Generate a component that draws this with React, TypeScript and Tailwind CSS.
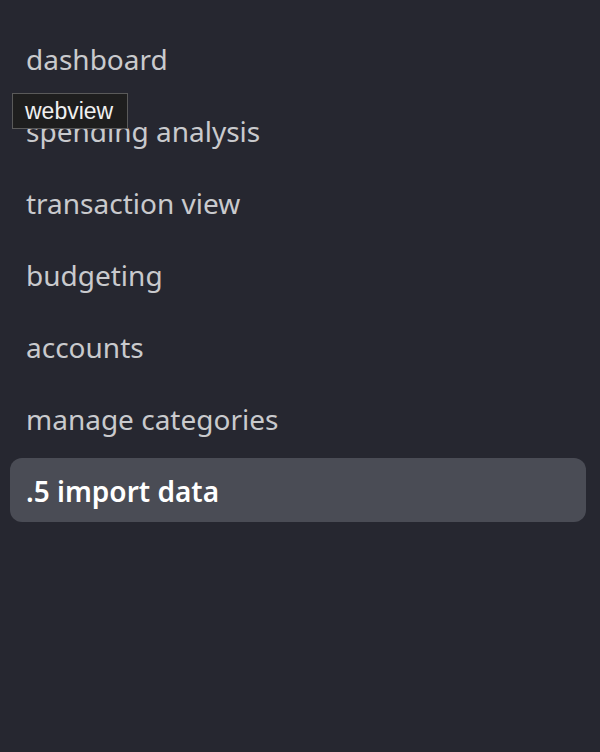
import { useState } from "react";

const items = [
  "dashboard",
  "spending analysis",
  "transaction view",
  "budgeting",
  "accounts",
  "manage categories",
  ".5 import data",
];

export default function App() {
  const [active, setActive] = useState(6);

  return (
    <div
      className="relative h-[752px] w-[600px] overflow-hidden bg-[#262730]"
      style={{ fontFamily: '"Noto Sans", Lato, sans-serif' }}
    >
      <nav className="flex flex-col gap-2 pt-[26px] pl-[10px] pr-[14px]">
        {items.map((label, i) => (
          <button
            key={label}
            onClick={() => setActive(i)}
            className={
              i === active
                ? "flex h-16 items-center rounded-xl bg-[#4a4c55] px-4 pt-[2px] text-left text-[28px] font-semibold text-white"
                : "flex h-16 items-center rounded-xl px-4 pt-[2px] text-left text-[28px] text-[#c9cacd]"
            }
          >
            {label}
          </button>
        ))}
      </nav>
      <div
        className="absolute left-3 top-[93px] flex h-9 w-[116px] items-center border border-[#5a5a5a] bg-[#1e1e1e] px-3 text-[23px] text-[#f0f0f0]"
        style={{ fontFamily: '"Liberation Sans", Arial, sans-serif' }}
      >
        webview
      </div>
    </div>
  );
}
